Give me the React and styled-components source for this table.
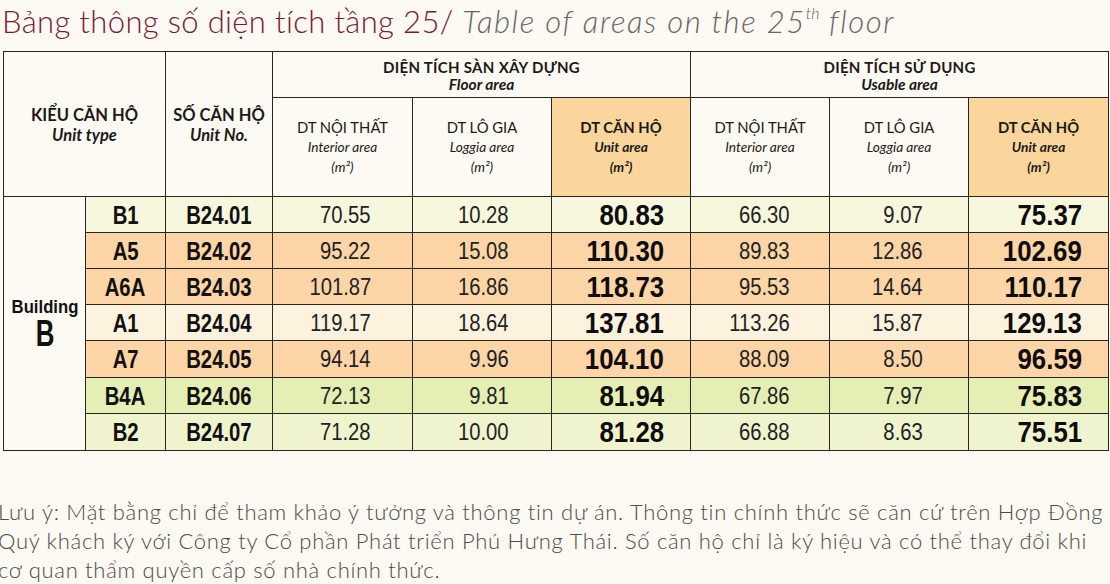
import React from "react";
import styled, { createGlobalStyle } from "styled-components";

const GlobalStyle = createGlobalStyle`
  html, body {
    margin: 0;
    padding: 0;
    background: #fdf9f3;
    overflow: hidden;
  }
`;

const rows = [
  { type: "B1", no: "B24.01", v: ["70.55", "10.28", "80.83", "66.30", "9.07", "75.37"], tone: "lime", h: 36 },
  { type: "A5", no: "B24.02", v: ["95.22", "15.08", "110.30", "89.83", "12.86", "102.69"], tone: "peach", h: 36 },
  { type: "A6A", no: "B24.03", v: ["101.87", "16.86", "118.73", "95.53", "14.64", "110.17"], tone: "peach", h: 36 },
  { type: "A1", no: "B24.04", v: ["119.17", "18.64", "137.81", "113.26", "15.87", "129.13"], tone: "cream", h: 36 },
  { type: "A7", no: "B24.05", v: ["94.14", "9.96", "104.10", "88.09", "8.50", "96.59"], tone: "peach", h: 37 },
  { type: "B4A", no: "B24.06", v: ["72.13", "9.81", "81.94", "67.86", "7.97", "75.83"], tone: "green", h: 36 },
  { type: "B2", no: "B24.07", v: ["71.28", "10.00", "81.28", "66.88", "8.63", "75.51"], tone: "mint", h: 37 },
];

const tones = {
  lime: "#f6f7dc",
  peach: "#fdd5a6",
  cream: "#fdf2de",
  green: "#e5eeb5",
  mint: "#eff4cf",
};

// khoảng trống bên phải của từng cột số thường
const numPad = [41, 42, 0, 39, 45];

function App() {
  return (
    <>
      <GlobalStyle />
      <Page>
        <Title>
          Bảng thông số diện tích tầng 25/{" "}
          <TitleEn>
            Table of areas on the 25<sup>th</sup> floor
          </TitleEn>
        </Title>

        <Table>
          <colgroup>
            <col style={{ width: 82 }} />
            <col style={{ width: 80 }} />
            <col style={{ width: 107 }} />
            <col style={{ width: 140 }} />
            <col style={{ width: 139 }} />
            <col style={{ width: 139 }} />
            <col style={{ width: 139 }} />
            <col style={{ width: 139 }} />
            <col style={{ width: 140 }} />
          </colgroup>
          <thead>
            <GroupRow>
              <HeadCell colSpan={2} rowSpan={2}>
                <HeadMain>KIỂU CĂN HỘ</HeadMain>
                <HeadSub>Unit type</HeadSub>
              </HeadCell>
              <HeadCell rowSpan={2}>
                <HeadMain>SỐ CĂN HỘ</HeadMain>
                <HeadSub>Unit No.</HeadSub>
              </HeadCell>
              <HeadCell colSpan={3}>
                <GroupMain>DIỆN TÍCH SÀN XÂY DỰNG</GroupMain>
                <GroupSub>Floor area</GroupSub>
              </HeadCell>
              <HeadCell colSpan={3}>
                <GroupMain>DIỆN TÍCH SỬ DỤNG</GroupMain>
                <GroupSub>Usable area</GroupSub>
              </HeadCell>
            </GroupRow>
            <SubRow>
              {[0, 1].map((g) => (
                <React.Fragment key={g}>
                  <HeadCell>
                    <ColMain>DT NỘI THẤT</ColMain>
                    <ColSub>Interior area</ColSub>
                    <ColSub>(m²)</ColSub>
                  </HeadCell>
                  <HeadCell>
                    <ColMain>DT LÔ GIA</ColMain>
                    <ColSub>Loggia area</ColSub>
                    <ColSub>(m²)</ColSub>
                  </HeadCell>
                  <HeadCell $accent>
                    <ColMain $strong>DT CĂN HỘ</ColMain>
                    <ColSub $strong>Unit area</ColSub>
                    <ColSub $strong>(m²)</ColSub>
                  </HeadCell>
                </React.Fragment>
              ))}
            </SubRow>
          </thead>
          <tbody>
            {rows.map((r, i) => (
              <DataRow key={r.no} $bg={tones[r.tone]} $h={r.h}>
                {i === 0 && (
                  <BuildingCell rowSpan={rows.length}>
                    <BuildingWord>
                      <Squeeze $x={0.88}>Building</Squeeze>
                    </BuildingWord>
                    <BuildingLetter>
                      <Squeeze $x={0.72}>B</Squeeze>
                    </BuildingLetter>
                  </BuildingCell>
                )}
                <CodeCell>
                  <Squeeze $x={0.78}>{r.type}</Squeeze>
                </CodeCell>
                <CodeCell>
                  <Squeeze $x={0.78}>{r.no}</Squeeze>
                </CodeCell>
                {r.v.map((val, j) =>
                  j % 3 === 2 ? (
                    <TotalCell key={j}>
                      <Squeeze $x={0.86} $origin="right">
                        {val}
                      </Squeeze>
                    </TotalCell>
                  ) : (
                    <NumCell key={j} $pad={numPad[j]}>
                      <Squeeze $x={0.88} $origin="right">
                        {val}
                      </Squeeze>
                    </NumCell>
                  )
                )}
              </DataRow>
            ))}
          </tbody>
        </Table>

        <Note>
          <NoteLine>
            Lưu ý: Mặt bằng chỉ để tham khảo ý tưởng và thông tin dự án. Thông tin chính thức sẽ căn cứ trên Hợp Đồng
          </NoteLine>
          <NoteLine>
            Quý khách ký với Công ty Cổ phần Phát triển Phú Hưng Thái. Số căn hộ chỉ là ký hiệu và có thể thay đổi khi
          </NoteLine>
          <NoteLine>cơ quan thẩm quyền cấp số nhà chính thức.</NoteLine>
        </Note>
      </Page>
    </>
  );
}

export default App;

const Page = styled.div`
  width: 1110px;
  height: 584px;
  overflow: hidden;
  background: #fdf9f3;
`;

const Title = styled.h1`
  margin: 0;
  padding: 1px 0 0 2px;
  height: 49px;
  box-sizing: border-box;
  font-family: Lato, "Open Sans", sans-serif;
  font-weight: 300;
  font-size: 31px;
  line-height: 40px;
  color: #781a34;
  white-space: nowrap;
  letter-spacing: 0.35px;
`;

const TitleEn = styled.span`
  font-style: italic;
  color: #6a6663;
  letter-spacing: 1.6px;

  sup {
    font-size: 16px;
    line-height: 0;
    vertical-align: 14px;
    letter-spacing: 0;
  }
`;

const Table = styled.table`
  margin-left: 3px;
  margin-top: 2px;
  width: 1105px;
  border-collapse: collapse;
  table-layout: fixed;
  border: 1.5px solid #2b2522;
`;

const GroupRow = styled.tr`
  height: 46px;
`;

const SubRow = styled.tr`
  height: 99px;
`;

const HeadCell = styled.th`
  border: 1px solid #2b2522;
  padding: 0;
  text-align: center;
  vertical-align: middle;
  background: ${(p) => (p.$accent ? "#fad69d" : "#fdf9f3")};
  font-family: Lato, "Open Sans", sans-serif;
  color: #1c1917;
`;

const HeadMain = styled.div`
  font-size: 16.5px;
  font-weight: 700;
  line-height: 20px;
  padding-top: 2px;
`;

const HeadSub = styled.div`
  font-size: 16.5px;
  font-weight: 700;
  font-style: italic;
  line-height: 20px;
`;

const GroupMain = styled.div`
  font-size: 15px;
  font-weight: 700;
  letter-spacing: 0.3px;
  line-height: 17px;
  padding-top: 2px;
`;

const GroupSub = styled.div`
  font-size: 15.5px;
  font-weight: 700;
  font-style: italic;
  line-height: 17px;
`;

const ColMain = styled.div`
  font-size: 14.8px;
  font-weight: ${(p) => (p.$strong ? 700 : 400)};
  line-height: 20px;
`;

const ColSub = styled.div`
  font-size: 13.7px;
  font-style: italic;
  font-weight: ${(p) => (p.$strong ? 700 : 400)};
  line-height: 20px;
`;

const DataRow = styled.tr`
  height: ${(p) => p.$h}px;
  background: ${(p) => p.$bg};
`;

const Squeeze = styled.span`
  display: inline-block;
  transform: scaleX(${(p) => p.$x});
  transform-origin: ${(p) => p.$origin || "center"};
`;

const BuildingCell = styled.td`
  border: 1px solid #2b2522;
  background: #fdf9f3;
  text-align: center;
  vertical-align: middle;
  padding: 0 0 2px;
  font-family: "Liberation Sans", Arial, sans-serif;
  font-weight: 700;
  color: #111;
`;

const BuildingWord = styled.div`
  font-size: 19px;
  line-height: 22px;
`;

const BuildingLetter = styled.div`
  font-size: 36px;
  line-height: 32px;
`;

const CodeCell = styled.td`
  border: 1px solid #2b2522;
  padding: 0;
  text-align: center;
  font-family: "Liberation Sans", Arial, sans-serif;
  font-weight: 700;
  font-size: 26px;
  line-height: 30px;
  color: #111;
`;

const NumCell = styled.td`
  border: 1px solid #2b2522;
  padding: 0 ${(p) => p.$pad}px 0 0;
  text-align: right;
  font-family: "Liberation Sans", Arial, sans-serif;
  font-weight: 400;
  font-size: 23px;
  line-height: 30px;
  color: #222;
`;

const TotalCell = styled.td`
  border: 1px solid #2b2522;
  padding: 0 26px 0 0;
  text-align: right;
  font-family: "Liberation Sans", Arial, sans-serif;
  font-weight: 700;
  font-size: 30px;
  line-height: 32px;
  color: #0f0d0c;
`;

const Note = styled.div`
  margin-top: 46px;
  margin-left: -2px;
  font-family: Lato, "Open Sans", sans-serif;
  font-weight: 300;
  font-size: 22px;
  letter-spacing: 0.7px;
  line-height: 29px;
  color: #4f4b48;
`;

const NoteLine = styled.div`
  white-space: nowrap;
`;
